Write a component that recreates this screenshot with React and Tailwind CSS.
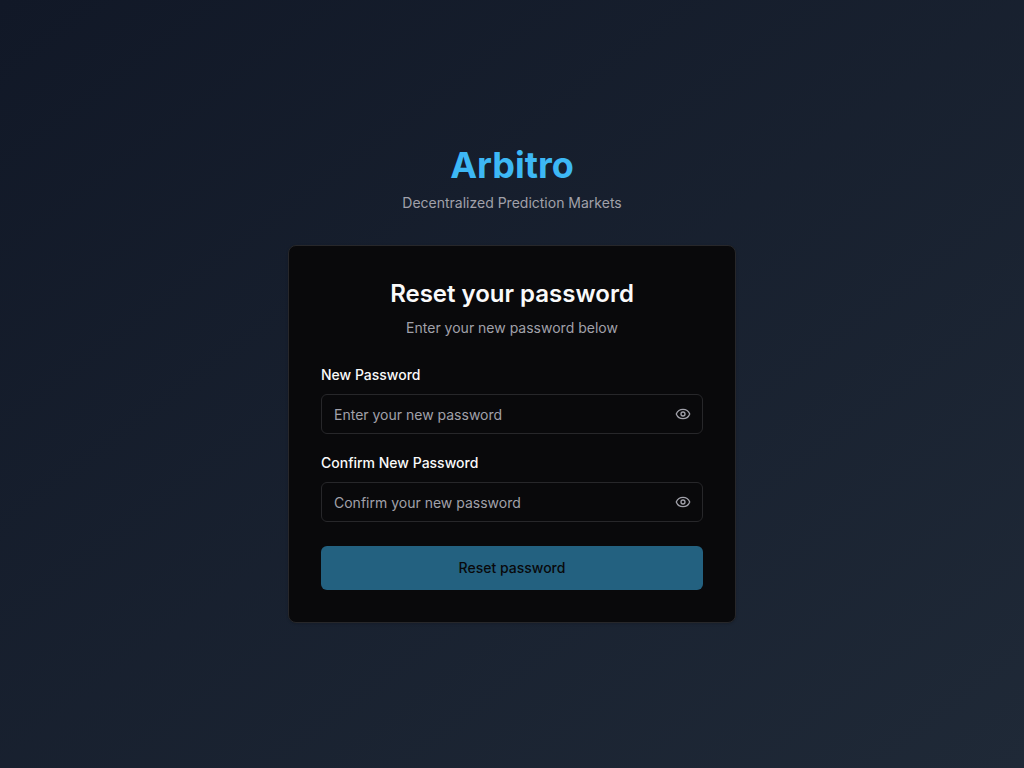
import { useState } from "react";
import { Eye, EyeOff } from "lucide-react";

function PasswordField({ id, label, placeholder, value, onChange }) {
  const [visible, setVisible] = useState(false);

  return (
    <div>
      <label htmlFor={id} className="text-sm font-medium text-[#fafafa]">
        {label}
      </label>
      <div className="relative mt-2">
        <input
          id={id}
          type={visible ? "text" : "password"}
          value={value}
          onChange={(e) => onChange(e.target.value)}
          placeholder={placeholder}
          className="block h-10 w-full rounded-md border border-[#27272a] bg-[#09090b] px-3 py-2 pr-10 text-sm text-[#fafafa] placeholder:text-[#a1a1aa] focus:outline-none focus:ring-2 focus:ring-[#3db8f5]"
        />
        <button
          type="button"
          aria-label={visible ? "Hide password" : "Show password"}
          onClick={() => setVisible(!visible)}
          className="absolute inset-y-0 right-0 flex items-center px-3 text-[#a1a1aa]"
        >
          {visible ? (
            <EyeOff className="h-4 w-4" />
          ) : (
            <Eye className="h-4 w-4" />
          )}
        </button>
      </div>
    </div>
  );
}

function App() {
  const [password, setPassword] = useState("");
  const [confirm, setConfirm] = useState("");

  return (
    <div className="flex min-h-screen items-center justify-center bg-linear-to-br/srgb from-[#111827] to-[#1f2937] p-4 font-['Inter',sans-serif]">
      <div className="w-full max-w-md">
        <div className="mb-8 text-center">
          <h1 className="mb-2 text-4xl font-bold text-[#3db8f5]">Arbitro</h1>
          <p className="text-sm text-[#a1a1aa]">
            Decentralized Prediction Markets
          </p>
        </div>

        <div className="rounded-lg border border-[#27272a] bg-[#09090b] p-8 shadow-sm">
          <div className="mb-6 text-center">
            <h2 className="mb-2 text-2xl font-semibold text-[#fafafa]">
              Reset your password
            </h2>
            <p className="text-sm text-[#a1a1aa]">
              Enter your new password below
            </p>
          </div>

          <form onSubmit={(e) => e.preventDefault()} className="space-y-4">
            <PasswordField
              id="password"
              label="New Password"
              placeholder="Enter your new password"
              value={password}
              onChange={setPassword}
            />
            <PasswordField
              id="confirmPassword"
              label="Confirm New Password"
              placeholder="Confirm your new password"
              value={confirm}
              onChange={setConfirm}
            />
            <button
              type="submit"
              disabled={!password || !confirm}
              className="mt-2 h-11 w-full rounded-md bg-[#3db8f5] text-sm font-medium text-[#09090b] disabled:opacity-50"
            >
              Reset password
            </button>
          </form>
        </div>
      </div>
    </div>
  );
}

export default App;
